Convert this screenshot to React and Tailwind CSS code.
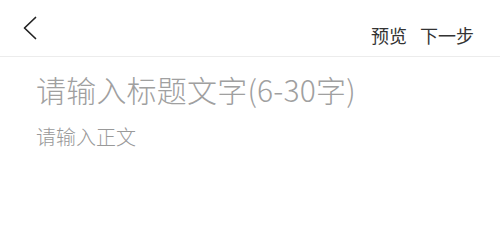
export default function App() {
  const font = { fontFamily: '"Noto Sans CJK SC", "Noto Sans", sans-serif' };
  return (
    <div className="w-[500px] h-[224px] bg-white overflow-hidden" style={font}>
      <div className="h-[57px] flex items-center justify-between border-b border-[#ececec] pl-[22px] pr-[26px]">
        <svg width="16" height="24" viewBox="0 0 16 24" fill="none">
          <path d="M13.5 1.5 L2.5 12 L13.5 22.5" stroke="#222" strokeWidth="1.7" strokeLinecap="round" strokeLinejoin="round" />
        </svg>
        <div className="flex items-center gap-[13px] text-[18px] leading-none text-[#333] pt-[14px]">
          <span>预览</span>
          <span>下一步</span>
        </div>
      </div>
      <div className="px-[36px] pt-[12px]">
        <div className="text-[30px] leading-[40px] font-light tracking-[0.2px] text-[#a0a0a0]">请输入标题文字(6-30字)</div>
        <div className="mt-[14px] text-[20px] leading-[28px] font-light text-[#999]">请输入正文</div>
      </div>
    </div>
  );
}
